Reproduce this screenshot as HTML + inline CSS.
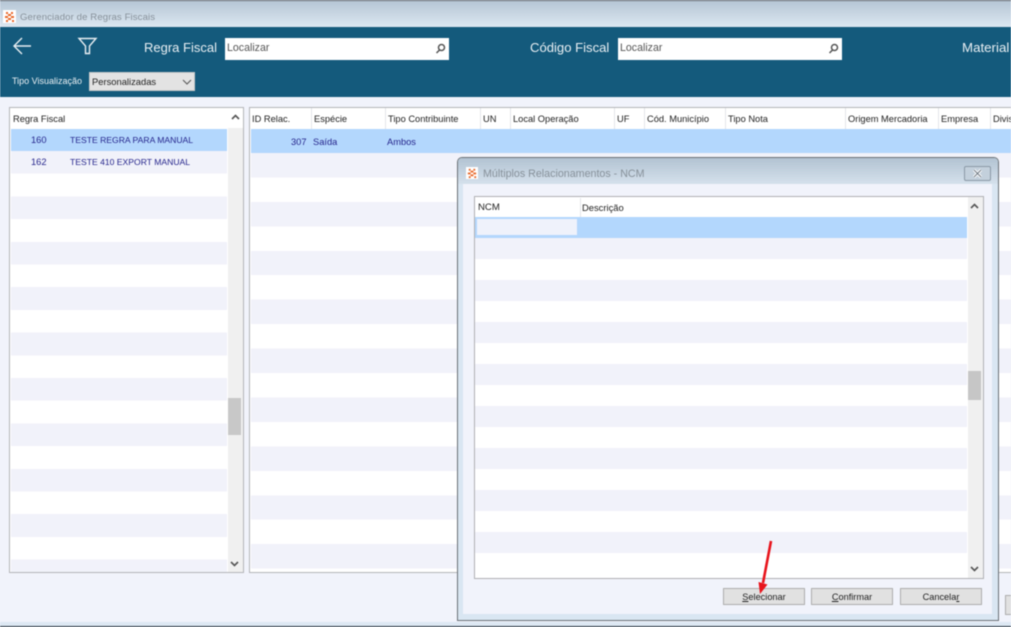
<!DOCTYPE html>
<html><head><meta charset="utf-8">
<style>
*{box-sizing:border-box}
html,body{margin:0;padding:0;width:1011px;height:627px;overflow:hidden;background:#f1f3fb}
body{position:relative;font-family:"Liberation Sans",sans-serif;font-size:9.3px;color:#333}
#w{position:absolute;left:0;top:0;width:1011px;height:627px;overflow:hidden;filter:blur(.45px)}
.a{position:absolute;white-space:nowrap}
.h{position:absolute;top:112.5px;font-size:9.3px;color:#222;white-space:nowrap;line-height:13px}
.v{position:absolute;top:108px;width:1px;height:21px;background:#e4e6ea}
.inp{position:absolute;background:#fff;height:22px;top:38px;color:#555;font-size:10.6px;line-height:20px;padding-left:2px}
.btn{position:absolute;top:588px;height:17px;background:#e1e1e1;border:1px solid #adadad;text-align:center;font-size:9.2px;line-height:16px;color:#222}
.blue{color:#25258c}
</style></head>
<body><div id="w">
<!-- title bar -->
<div class="a" style="left:0;top:0;width:1011px;height:27px;background:linear-gradient(#b4c5d4,#dce7f1)"></div>
<div class="a" style="left:0;top:0;width:1011px;height:1px;background:#5b6268"></div>
<svg class="a" style="left:3px;top:10px" width="13" height="13" viewBox="0 0 13 13"><rect width="13" height="13" fill="#fff"/><g fill="#e8682a"><rect x="3" y="2" width="2" height="2"/><rect x="8" y="2" width="2" height="2"/><rect x="5" y="4" width="3" height="2"/><rect x="2" y="6" width="3" height="2"/><rect x="8" y="6" width="3" height="2"/><rect x="5" y="8" width="3" height="2"/><rect x="3" y="10" width="2" height="2"/><rect x="9" y="10" width="2" height="2"/></g></svg>
<div class="a" style="left:20px;top:11px;font-size:9.6px;color:#87919a;line-height:13px;letter-spacing:.1px">Gerenciador de Regras Fiscais</div>
<!-- header -->
<div class="a" style="left:0;top:27px;width:1011px;height:70px;background:#145a7c"></div>
<svg class="a" style="left:12px;top:36px" width="22" height="20" viewBox="0 0 22 20" fill="none" stroke="#e8eef2" stroke-width="1.4"><path d="M2 10H19M10 2L2 10L10 18"/></svg>
<svg class="a" style="left:77px;top:37px" width="22" height="18" viewBox="0 0 22 18" fill="none" stroke="#e8eef2" stroke-width="1.4"><path d="M2 1.5H19L12.5 9V16.5L8.5 16.5V9Z"/></svg>
<div class="a" style="left:144px;top:39px;font-size:13px;color:#e9eff3;line-height:17px">Regra Fiscal</div>
<div class="inp" style="left:225px;width:224px">Localizar</div>
<svg class="a" style="left:435px;top:43px" width="11" height="11" viewBox="0 0 11 11" fill="none" stroke="#555" stroke-width="1.5"><circle cx="6.5" cy="4.5" r="3"/><path d="M4.5 7L1.5 10"/></svg>
<div class="a" style="left:530px;top:39px;font-size:13.1px;color:#e9eff3;line-height:17px">Código Fiscal</div>
<div class="inp" style="left:618px;width:224px">Localizar</div>
<svg class="a" style="left:828px;top:43px" width="11" height="11" viewBox="0 0 11 11" fill="none" stroke="#555" stroke-width="1.5"><circle cx="6.5" cy="4.5" r="3"/><path d="M4.5 7L1.5 10"/></svg>
<div class="a" style="left:962px;top:39px;font-size:13.3px;color:#e9eff3;line-height:17px">Material</div>
<div class="a" style="left:12px;top:75px;font-size:9px;color:#e9eff3;line-height:13px">Tipo Visualização</div>
<div class="a" style="left:89px;top:72px;width:106px;height:19px;background:#e3e3e3;border:1px solid #c8c8c8;font-size:9.4px;line-height:18px;padding-left:2px;color:#222">Personalizadas</div>
<svg class="a" style="left:182px;top:79px" width="10" height="6" viewBox="0 0 10 6" fill="none" stroke="#555" stroke-width="1"><path d="M1 1L5 5L9 1"/></svg>

<!-- left grid -->
<div class="a" style="left:9px;top:107px;width:235px;height:466px;background:#fff;border:1px solid #b4b5b8"></div>
<div class="a" style="left:11px;top:151.2px;width:216px;height:420.8px;background:repeating-linear-gradient(#f1f2fa 0,#f1f2fa 22.7px,#fff 22.7px,#fff 45.4px)"></div>
<div class="a" style="left:11px;top:128.5px;width:216px;height:22.7px;background:#b3d7fd"></div>
<div class="a" style="left:228px;top:108px;width:15px;height:464px;background:#f0f0f0"></div>
<div class="a" style="left:228px;top:108px;width:15px;height:20px;background:#fff"></div>
<div class="a" style="left:228px;top:398px;width:13px;height:37px;background:#c8c8c8"></div>
<svg class="a" style="left:231px;top:114px" width="9" height="6" viewBox="0 0 9 6" fill="none" stroke="#555" stroke-width="1.6"><path d="M1 5L4.5 1.5L8 5"/></svg>
<svg class="a" style="left:230px;top:561px" width="9" height="6" viewBox="0 0 9 6" fill="none" stroke="#555" stroke-width="1.6"><path d="M1 1L4.5 4.5L8 1"/></svg>
<div class="h" style="left:13px">Regra Fiscal</div>
<div class="a blue" style="left:31px;top:134px;line-height:13px">160</div>
<div class="a blue" style="left:70px;top:134px;line-height:13px;font-size:8.6px">TESTE REGRA PARA MANUAL</div>
<div class="a blue" style="left:31px;top:156px;line-height:13px">162</div>
<div class="a blue" style="left:70px;top:156px;line-height:13px;font-size:8.6px">TESTE 410 EXPORT MANUAL</div>

<!-- right grid -->
<div class="a" style="left:249px;top:107px;width:770px;height:466px;background:#fff;border:1px solid #b4b5b8"></div>
<div class="a" style="left:251px;top:153px;width:760px;height:416px;background:repeating-linear-gradient(#f1f2fa 0,#f1f2fa 24.45px,#fff 24.45px,#fff 48.9px)"></div>
<div class="a" style="left:251px;top:129px;width:760px;height:24px;background:#b3d7fd"></div>
<div class="h" style="left:252px">ID Relac.</div>
<div class="v" style="left:311px"></div>
<div class="h" style="left:314px">Espécie</div>
<div class="v" style="left:385px"></div>
<div class="h" style="left:388px">Tipo Contribuinte</div>
<div class="v" style="left:480px"></div>
<div class="h" style="left:483px">UN</div>
<div class="v" style="left:510px"></div>
<div class="h" style="left:513px">Local Operação</div>
<div class="v" style="left:614px"></div>
<div class="h" style="left:617px">UF</div>
<div class="v" style="left:644px"></div>
<div class="h" style="left:647px">Cód. Município</div>
<div class="v" style="left:725px"></div>
<div class="h" style="left:728px">Tipo Nota</div>
<div class="v" style="left:845px"></div>
<div class="h" style="left:848px">Origem Mercadoria</div>
<div class="v" style="left:938px"></div>
<div class="h" style="left:941px">Empresa</div>
<div class="v" style="left:990px"></div>
<div class="h" style="left:993px">Divis</div>
<div class="a blue" style="left:291px;top:135.5px;line-height:13px">307</div>
<div class="a blue" style="left:313px;top:135.5px;line-height:13px">Saída</div>
<div class="a blue" style="left:387px;top:135.5px;line-height:13px">Ambos</div>

<!-- footer right bits -->
<div class="a" style="left:998px;top:573px;width:13px;height:49px;background:#f1f3fb"></div>
<div class="a" style="left:998px;top:572px;width:13px;height:1px;background:#b4b5b8"></div>
<div class="a" style="left:1005px;top:595px;width:6px;height:20px;background:#e1e1e1;border:1px solid #adadad;border-right:0"></div>
<div class="a" style="left:0;top:622px;width:1011px;height:4px;background:#dde8f3"></div>
<div class="a" style="left:0;top:626px;width:1011px;height:1px;background:#26323c"></div>

<!-- dialog -->
<div class="a" style="left:457px;top:157px;width:542px;height:464px;border:1px solid #6a7076;border-radius:5px 5px 0 0;background:#d9e6f2"></div>
<div class="a" style="left:458px;top:158px;width:540px;height:26px;border-radius:4px 4px 0 0;background:linear-gradient(#b2c3d2,#d5e1ec)"></div>
<div class="a" style="left:463px;top:184px;width:529px;height:430px;background:#f1f3fb"></div>
<svg class="a" style="left:466px;top:167px" width="12" height="12" viewBox="0 0 13 13"><rect width="13" height="13" fill="#fff"/><g fill="#e8682a"><rect x="3" y="2" width="2" height="2"/><rect x="8" y="2" width="2" height="2"/><rect x="5" y="4" width="3" height="2"/><rect x="2" y="6" width="3" height="2"/><rect x="8" y="6" width="3" height="2"/><rect x="5" y="8" width="3" height="2"/><rect x="3" y="10" width="2" height="2"/><rect x="9" y="10" width="2" height="2"/></g></svg>
<div class="a" style="left:483px;top:167px;font-size:10.7px;color:#87919a;line-height:14px">Múltiplos Relacionamentos - NCM</div>
<div class="a" style="left:964px;top:166px;width:27px;height:15px;background:#c3d0dc;border:1px solid #8b99a6;border-radius:2px"></div>
<svg class="a" style="left:972px;top:169px" width="11" height="9" viewBox="0 0 11 9" fill="none" stroke="#fff" stroke-width="3"><path d="M2 1L9 8M9 1L2 8"/></svg>
<svg class="a" style="left:972px;top:169px" width="11" height="9" viewBox="0 0 11 9" fill="none" stroke="#6f7a84" stroke-width="1"><path d="M2 1L9 8M9 1L2 8"/></svg>

<!-- dialog grid -->
<div class="a" style="left:474px;top:196px;width:510px;height:383px;background:#fff;border:1px solid #b0b1b4"></div>
<div class="a" style="left:475px;top:238px;width:492px;height:335px;background:repeating-linear-gradient(#f1f2fa 0,#f1f2fa 21px,#fff 21px,#fff 42px)"></div>
<div class="a" style="left:475px;top:217px;width:492px;height:21px;background:#b3d7fd"></div>
<div class="a" style="left:477px;top:219px;width:100px;height:16px;background:#eff2fb"></div>
<div class="a" style="left:968px;top:197px;width:15px;height:381px;background:#f0f0f0"></div>
<div class="a" style="left:968px;top:371px;width:13px;height:29px;background:#c6c6c6"></div>
<svg class="a" style="left:970px;top:203px" width="9" height="6" viewBox="0 0 9 6" fill="none" stroke="#555" stroke-width="1.6"><path d="M1 5L4.5 1.5L8 5"/></svg>
<svg class="a" style="left:970px;top:566px" width="9" height="6" viewBox="0 0 9 6" fill="none" stroke="#555" stroke-width="1.6"><path d="M1 1L4.5 4.5L8 1"/></svg>
<div class="a" style="left:478px;top:201px;line-height:13px;color:#222;font-size:9.6px">NCM</div>
<div class="a" style="left:580px;top:198px;width:1px;height:19px;background:#e4e6ea"></div>
<div class="a" style="left:582px;top:201px;line-height:13px;color:#222;font-size:9.4px">Descrição</div>

<!-- buttons -->
<div class="btn" style="left:723px;width:82px"><u>S</u>elecionar</div>
<div class="btn" style="left:811px;width:82px"><u>C</u>onfirmar</div>
<div class="btn" style="left:900px;width:82px">Cancela<u>r</u></div>

<!-- red arrow -->
<svg class="a" style="left:750px;top:535px" width="30" height="62" viewBox="0 0 30 62"><path d="M21 6L13 48" stroke="#e8141c" stroke-width="2.6" fill="none"/><path d="M8.5 47L17.5 49.5L10 59Z" fill="#e8141c"/></svg>
</div></body></html>
